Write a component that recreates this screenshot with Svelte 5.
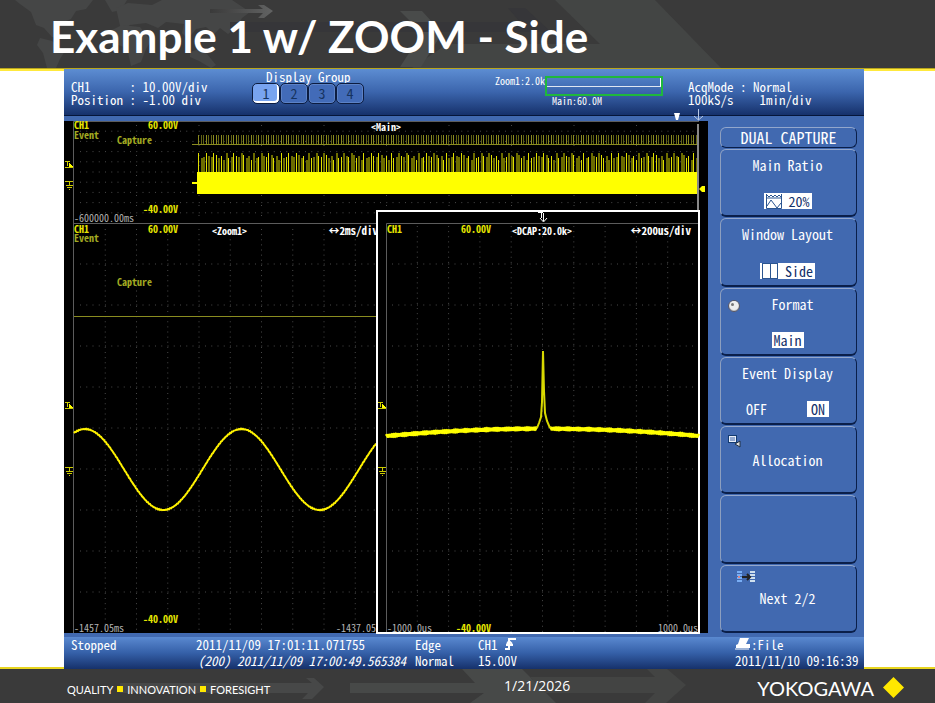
<script lang="ts">
  type Label = { x: number; y: number; text: string; kind?: string; size?: number; end?: boolean };

  let group = $state(1);

  // Horizontal and vertical positions of the dotted graticule
  const steps = (from: number, step: number, count: number) =>
    Array.from({ length: count }, (_, i) => from + step * (i + 1));

  const mainCols = steps(74, 62.5, 9);
  const mainRows = steps(121, 10.2, 9);
  const zoomCols = steps(74, 31.25, 9);
  const dcapCols = steps(386, 31.3, 9);
  const rows = steps(223, 41, 9);

  // 200 captured events spread over the main record
  const tops = [153, 158, 157, 153, 156, 157, 153, 155, 158, 156, 160];
  const events = Array.from({ length: 200 }, (_, i) => ({
    x: 198 + Math.round(i * 2.5),
    top: tops[i % tops.length],
    bright: i % 3 === 0 || i % 7 === 0
  }));

  // Small repeatable jitter so the traces look sampled
  const noise = (x: number) => Math.sin(x * 78.233) * 0.4;

  let sine = '';
  for (let x = 74; x <= 376; x++) {
    const y = 469.5 - 40.5 * Math.cos(((x - 85) / 156.5) * 2 * Math.PI) + noise(x);
    sine += `${x === 74 ? 'M' : 'L'}${x} ${y.toFixed(1)}`;
  }

  function arc(from: number, to: number) {
    let d = '';
    for (let x = from; x <= to; x++) {
      const y = 428.7 + 7.3 * ((x - 543) / 156) ** 2 + noise(x);
      d += `${x === from ? 'M' : 'L'}${x} ${y.toFixed(1)}`;
    }
    return d;
  }
  const base = arc(386, 537) + arc(550, 699);

  const labels: Label[] = [
    { x: 74, y: 129, text: 'CH1' },
    { x: 74, y: 139, text: 'Event', kind: 'event' },
    { x: 117, y: 144, text: 'Capture', kind: 'event' },
    { x: 178, y: 129, text: '60.00V', end: true },
    { x: 371, y: 131, text: '<Main>', kind: 'white' },
    { x: 178, y: 213, text: '-40.00V', end: true },
    { x: 74, y: 222, text: '-600000.00ms', kind: 'grey' },
    { x: 74, y: 233, text: 'CH1' },
    { x: 74, y: 242, text: 'Event', kind: 'event' },
    { x: 117, y: 286, text: 'Capture', kind: 'event' },
    { x: 178, y: 233, text: '60.00V', end: true },
    { x: 212, y: 235, text: '<Zoom1>', kind: 'white' },
    { x: 378, y: 235, text: '↔2ms/div', kind: 'white', size: 11, end: true },
    { x: 178, y: 623, text: '-40.00V', end: true },
    { x: 74, y: 632, text: '-1457.05ms', kind: 'grey' },
    { x: 376, y: 632, text: '-1437.05', kind: 'grey', end: true }
  ];

  const dcapLabels: Label[] = [
    { x: 387, y: 233, text: 'CH1' },
    { x: 491, y: 233, text: '60.00V', end: true },
    { x: 512, y: 235, text: '<DCAP:20.0k>', kind: 'white' },
    { x: 691, y: 235, text: '↔200us/div', kind: 'white', size: 11, end: true },
    { x: 491, y: 632, text: '-40.00V', end: true },
    { x: 387, y: 632, text: '-1000.0us', kind: 'grey' },
    { x: 698, y: 632, text: '1000.0us', kind: 'grey', end: true }
  ];
</script>

{#snippet tag(l: Label)}
  <text
    x={l.x}
    y={l.y}
    class={l.kind ?? 'yellow'}
    class:large={l.size === 11}
    text-anchor={l.end ? 'end' : 'start'}>{l.text}</text>
{/snippet}

{#snippet marks(x: number, t: number, g: number)}
  <g class="mark" shape-rendering="crispEdges">
    <path d="M{x} {t}h5M{x + 2} {t}v5M{x} {t + 6}h8" />
    <path class="solid" d="M{x + 4} {t + 6}v-4l4 4z" />
    <path d="M{x} {g}h8M{x + 4} {g}v4M{x + 1} {g + 4}h7M{x + 2} {g + 6}h5M{x + 4} {g + 8}h1" />
  </g>
{/snippet}

<div class="slide">
  <header>
    <svg class="deco" viewBox="0 0 935 68" preserveAspectRatio="xMinYMin slice" aria-hidden="true">
      <g fill="#454646">
        <path d="M15 0h78l-7 9-10 2-5 8-12 5-4 9 6 6-9-2-8-9-8-3-5-13-11-8z" />
        <path d="M40 38l12 3 13 10-5 8-4 9h-9l-4-15-6-8z" />
        <path d="M105 0h22l-6 10-9 2z" />
        <path d="M116 8l12-5 24 2 10-5h70l18 12-8 6-5 9-9 7-8-6-6 6-8-7-10 2-8 10-6-6 2-9-18-2-8 6-12-5-16 2-9 5z" />
        <path d="M110 31l12-6 18 2 11 14-5 8-5 13-10 4-4-18-12-4z" />
        <path d="M190 52l9-3 8 5 9 11-5 3-12-7-9-4z" />
      </g>
      <path d="M555 0h100l66 68H412l35-24h153z" fill="#434544" />
      <path d="M400 11h22l20 22-21 34h-21l22-34z" fill="#494b4a" />
      <path d="M230 22h290l-12-14h17l26 24H230z" fill="#363639" />
      <linearGradient id="fade"><stop stop-color="#3a3a3a" /><stop offset="1" stop-color="#626363" /></linearGradient>
      <path d="M210 9h53l-5-4h6l9 6-9 7h-6l5-5h-53z" fill="url(#fade)" />
    </svg>
    <h1>Example 1 w/ ZOOM - Side</h1>
  </header>

  <main>
    <div class="scope">
      <div class="topbar">
        <div class="channel">
          <p>CH1&nbsp;&nbsp;&nbsp;&nbsp;&nbsp; : 10.00V/div</p>
          <p>Position : -1.00 div</p>
        </div>
        <div class="display">
          <p>Display Group</p>
          <div class="groups">
            {#each [1, 2, 3, 4] as n}
              <button type="button" class:active={group === n} onclick={() => (group = n)}>{n}</button>
            {/each}
          </div>
        </div>
        <div class="record">
          <span>Zoom1:2.0k</span>
          <div class="span">
            <div class="range"><i></i></div>
            <span>Main:60.0M</span>
          </div>
        </div>
        <div class="acq">
          <p>AcqMode : Normal</p>
          <p>100kS/s&nbsp;&nbsp;&nbsp; 1min/div</p>
        </div>
      </div>

      <div class="body">
        <svg class="plot" viewBox="64 121 644 512" role="img" aria-label="Oscilloscope waveforms">
          <rect x="64" y="121" width="644" height="512" />

          <!-- graticules -->
          <g class="grid">
            {#each mainCols as x}<path d="M{x} 125V223" stroke-dasharray="1 9" />{/each}
            {#each mainRows as y}<path d="M80 {y}H697" stroke-dasharray="1 5.25" />{/each}
            {#each zoomCols as x}<path d="M{x} 229V633" stroke-dasharray="1 4.125" />{/each}
            {#each rows as y}<path d="M80 {y}H376" stroke-dasharray="1 5.25" />{/each}
          </g>
          <path class="frame" d="M73.5 633V121.500H699M74 223.500H699" />

          <!-- main record -->
          <g shape-rendering="crispEdges">
            {#each events as e}
              <rect x={e.x} y="135" width="1" height="9" fill={e.bright ? '#8a8a20' : '#626414'} />
              <rect
                x={e.x}
                y={e.top}
                width={e.bright ? 1 : 2}
                height={172 - e.top}
                fill={e.bright ? '#e0e000' : '#6c6c00'}
              />
            {/each}
            <rect x="192" y="144" width="507" height="1" fill="#8a8c20" />
            <rect x="192" y="182" width="6" height="2" fill="#ff0" />
            <rect x="197" y="172" width="502" height="22" fill="#ff0" />
            <rect x="697" y="124" width="2" height="87" fill="#888" />
          </g>
          <path d="M699 189l3-3h3v6h-3z" fill="#ff0" />

          <!-- zoom1 -->
          <path class="event-line" d="M74 316.500H377" />
          <path class="trace" d={sine} />
          {#each labels as l}{@render tag(l)}{/each}
          {@render marks(65, 161, 181)}
          {@render marks(65, 402, 467)}

          <!-- dual capture window -->
          <rect x="377" y="211" width="322" height="422" stroke="#fff" stroke-width="2" />
          <g class="grid">
            {#each dcapCols as x}<path d="M{x} 226V632" stroke-dasharray="1 4.125" />{/each}
            {#each rows as y}<path d="M392 {y}H697" stroke-dasharray="1 5.25" />{/each}
          </g>
          <path class="frame" d="M386.500 632V223.500H698" />
          <path class="trace thick" d={base} />
          <path class="spike" d="M537 428l2-5 2-6 1-15 1-51 1 40 1 22 2 8 3 7" />
          {#each dcapLabels as l}{@render tag(l)}{/each}
          {@render marks(378, 402, 467)}
          <path class="cursor" d="M538 212.500h5M541.500 212v6M543.500 213v8M540 218l3.500 4 3.500-4" />

          <!-- position pointers reaching into the top bar -->
          <path d="M674 113h6l-2 7h-2z" fill="#fff" />
          <path class="cursor pale" d="M698.500 109v11M694 116l4.500 4 4.500-4" />
        </svg>

        <nav class="menu" aria-label="Dual capture">
          <h2>DUAL CAPTURE</h2>
          <button type="button">
            <span>Main Ratio</span>
            <span class="value">
              <svg width="18" height="16" viewBox="0 0 18 16">
                <path d="M2.500 1v14.500h15V1" />
                <path d="M3 2l2 2 2-2 2 2 2-2 2 2 2-2 2 2M3 5h14M3 13l4-6 6 8 4-5" />
              </svg>
              <b>20%</b>
            </span>
          </button>
          <button type="button">
            <span>Window Layout</span>
            <span class="value">
              <svg width="18" height="16" viewBox="0 0 18 16">
                <path d="M2.500 0v15.500M10.500 0v15.500M17.500 0v15.500M2 .5h16M2 15.500h16" />
              </svg>
              <b>Side</b>
            </span>
          </button>
          <button type="button">
            <svg class="corner" width="12" height="12" viewBox="0 0 12 12">
              <circle cx="6" cy="6" r="5.500" fill="#c9c9c9" stroke="#556" />
              <circle cx="6" cy="5.500" r="4.500" fill="#eee" />
              <circle cx="4.500" cy="4.500" r="1.500" fill="#777" />
            </svg>
            <span class="indent">Format</span>
            <span class="value"><b>Main</b></span>
          </button>
          <button type="button">
            <span>Event Display</span>
            <span class="toggle"><span>OFF</span><b>ON</b></span>
          </button>
          <button type="button" class="single">
            <svg class="corner allocation" width="14" height="13" viewBox="0 0 14 13">
              <rect x=".5" y=".5" width="8" height="7" fill="#e8eef8" stroke="#123a70" />
              <path d="M2 3h5M2 5h5" stroke="#3c64a8" fill="none" />
              <path d="M7 9l5-3v6z" fill="#ddd" stroke="#234" />
            </svg>
            <span>Allocation</span>
          </button>
          <button type="button" aria-label="Empty"></button>
          <button type="button" class="single">
            <svg class="corner next" width="18" height="12" viewBox="0 0 18 12">
              <path d="M0 1h5M0 4h5M0 7h5M0 10h5" stroke="#79aef5" stroke-width="2" />
              <path d="M13 1h5M13 4h5M13 7h5M13 10h5" stroke="#cfe0ee" stroke-width="2" />
              <path d="M5 6h7M10 3l3 3-3 3" stroke="#222" stroke-width="2" fill="none" />
              <rect x="1" y="5" width="2" height="2" fill="#d88" />
            </svg>
            <span>Next 2/2</span>
          </button>
        </nav>
      </div>

      <div class="status">
        <div><p>Stopped</p></div>
        <div>
          <p>2011/11/09 17:01:11.071755</p>
          <p class="last">(200) 2011/11/09 17:00:49.565384</p>
        </div>
        <div><p>Edge</p><p>Normal</p></div>
        <div>
          <p>
            CH1
            <svg width="12" height="12" viewBox="0 0 12 12">
              <path d="M1 11h4V1h7M2 7h7M3 6l2-3 3 3" fill="none" stroke="#fff" stroke-width="2" />
            </svg>
          </p>
          <p>15.00V</p>
        </div>
        <div>
          <p>
            <svg width="16" height="12" viewBox="0 0 16 12">
              <path d="M5 0h9l-3 6h4v4H1V7l2-1z" fill="#fff" />
              <path d="M0 11h14" stroke="#fff" />
            </svg>:File
          </p>
          <p>2011/11/10 09:16:39</p>
        </div>
      </div>
    </div>
  </main>

  <footer>
    <svg class="deco" viewBox="0 0 935 34" preserveAspectRatio="xMinYMin slice" aria-hidden="true">
      <path d="M120 14h192l-6-5h8l10 9-12 12h-10l6-6H120z" fill="#474848" />
      <path d="M350 14h125l-13-14h60l34 34h-86l14-10H350z" fill="#474948" />
      <path d="M530 8h125l-8-8h20l19 16-20 18h-21l10-10H545z" fill="#434443" />
    </svg>
    <p class="motto">QUALITY<i></i>INNOVATION<i></i>FORESIGHT</p>
    <time datetime="2026-01-21">1/21/2026</time>
    <p class="brand">
      YOKOGAWA
      <svg width="21" height="21" viewBox="0 0 21 21" aria-hidden="true">
        <path d="M10.500 0L21 10.500 10.500 21 0 10.500z" fill="#ffe800" />
      </svg>
    </p>
  </footer>
</div>

<style>
  :global(body) {
    margin: 0;
    background: #fff;
  }

  .slide {
    display: flex;
    flex-direction: column;
    font-family: 'Noto Sans CJK JP', 'Liberation Mono', monospace;
    color: #fff;
  }

  p,
  h1,
  h2 {
    margin: 0;
    font-weight: normal;
    white-space: nowrap;
  }

  header,
  footer {
    position: relative;
    background: #3a3a3a;
    overflow: hidden;
  }

  header {
    height: 68px;
    border-bottom: 1px solid #b8a51c;
  }

  .deco {
    position: absolute;
    inset: 0;
    width: 100%;
    height: 100%;
  }

  h1 {
    position: relative;
    padding: 8px 0 0 50px;
    font: bold 44px/56px Lato, sans-serif;
  }

  main {
    padding: 0 71px 0 64px;
    background: linear-gradient(#ffe93c 2px, #fff 2px, #fff calc(100% - 2px), #e8d51e calc(100% - 2px));
  }

  .scope {
    background: #4169b0;
    font-size: 13px;
    line-height: 13px;
    font-feature-settings: 'hwid';
  }

  .topbar {
    display: grid;
    grid-template-columns: 181fr 243fr 193fr 176fr;
    height: 46px;
    margin-bottom: 5px;
    padding-left: 7px;
    border-bottom: 1px solid #06163a;
    background: linear-gradient(#5d8dd2, #3b65ad 50%, #16316b);
  }

  .topbar > div {
    min-width: 0;
  }

  .channel,
  .acq {
    padding-top: 11px;
  }

  .display p {
    padding: 1px 0 0 14px;
  }

  .groups {
    display: flex;
  }

  .groups button {
    width: 28px;
    height: 21px;
    padding: 0;
    border: 1px solid #0c1c40;
    border-radius: 5px;
    background: #426bb8;
    box-shadow: inset 0 0 0 1px #5c82c6;
    color: #16335f;
    font: inherit;
    font-size: 14px;
  }

  .groups button.active {
    background: #78a4f0;
    box-shadow: inset -1px -1px 0 1px #fff;
  }

  .record {
    display: flex;
    font-size: 10px;
    line-height: 12px;
    padding-top: 6px;
  }

  .span {
    width: 118px;
    margin-top: 1px;
  }

  .range {
    box-sizing: border-box;
    height: 20px;
    border: 2px solid #1fb83c;
  }

  .range i {
    display: block;
    height: 8px;
    border-right: 1px solid #fff;
    border-bottom: 1px solid #dfe6f2;
  }

  .span span {
    display: block;
    padding-left: 7px;
    line-height: 10px;
  }

  .body {
    display: grid;
    grid-template-columns: 644fr 156fr;
  }

  .plot {
    position: relative;
    width: 100%;
    height: auto;
    overflow: visible;
  }

  .plot text {
    font-size: 10px;
    white-space: pre;
  }

  .plot .large {
    font-size: 11px;
  }

  .yellow {
    fill: #e6e600;
    font-weight: bold;
  }

  .event {
    fill: #a3aa22;
    font-weight: bold;
  }

  .white {
    fill: #fff;
    font-weight: bold;
  }

  .grey {
    fill: #b4b4b4;
  }

  .grid {
    stroke: #484848;
    fill: none;
  }

  .frame {
    stroke: #5c5c5c;
    fill: none;
  }

  .event-line {
    stroke: #8a8c20;
  }

  .trace,
  .spike {
    fill: none;
    stroke: #fff200;
    stroke-width: 2;
  }

  .thick {
    stroke: #ff0;
    stroke-width: 4;
  }

  .spike {
    stroke: #d8d800;
  }

  .mark path {
    fill: none;
    stroke: #cccc00;
  }

  .mark .solid {
    fill: #ff0;
    stroke: none;
  }

  .cursor {
    fill: none;
    stroke: #fff;
  }

  .pale {
    stroke: #b9c9e6;
  }

  .menu {
    min-width: 0;
    display: flex;
    flex-direction: column;
    gap: 1px;
    padding: 6px 7px 0 12px;
    font-size: 14px;
    line-height: 18px;
  }

  .menu h2,
  .menu button {
    box-sizing: border-box;
    border: 1px solid #0a1f4a;
    border-top-color: #93a7cc;
    border-left-color: #8d9fbf;
    border-radius: 6px;
    background: none;
    text-align: center;
  }

  .menu h2 {
    height: 21px;
    font-size: 16px;
    line-height: 18px;
  }

  .menu button {
    position: relative;
    flex: 1;
    display: flex;
    flex-direction: column;
    align-items: center;
    justify-content: space-between;
    padding: 6px 2px 6px 0;
    border-bottom-width: 2px;
    color: #fff;
    font: inherit;
  }

  .menu .single {
    justify-content: center;
  }

  .menu .corner {
    position: absolute;
    top: 11px;
    left: 7px;
  }

  .menu .allocation {
    top: 8px;
  }

  .menu .next {
    top: 5px;
    left: 16px;
  }

  .indent {
    padding-left: 10px;
  }

  b {
    font-weight: normal;
  }

  .value,
  .toggle b {
    display: flex;
    background: #fff;
    color: #12306a;
    line-height: 16px;
  }

  .value b {
    padding: 0 2px;
  }

  .value svg + b {
    padding-left: 7px;
  }

  .value path {
    fill: none;
    stroke: #2b5590;
  }

  .toggle {
    display: flex;
    gap: 40px;
    line-height: 16px;
  }

  .toggle b {
    padding: 0 4px;
  }

  .status {
    display: grid;
    grid-template-columns: 125fr 219fr 63fr 257fr 129fr;
    margin-top: 4px;
    padding-left: 7px;
    height: 32px;
    background: linear-gradient(#5a89d0, #3560a8 50%, #16316b);
    line-height: 16px;
  }

  .status > div {
    min-width: 0;
  }

  .last {
    padding-left: 2px;
    font-style: italic;
  }

  footer {
    display: grid;
    grid-template-columns: 504fr 431fr;
    align-items: center;
    height: 34px;
    font-family: Lato, sans-serif;
  }

  footer p,
  footer time {
    position: relative;
  }

  footer time {
    grid-area: 1 / 2;
    font: 14px/20px 'Open Sans', sans-serif;
  }

  .motto {
    display: flex;
    align-items: center;
    gap: 4px;
    padding: 6px 0 0 67px;
    font-size: 11px;
  }

  .motto i {
    width: 6px;
    height: 6px;
    background: #ffe800;
  }

  .brand {
    grid-area: 1 / 2;
    justify-self: end;
    display: flex;
    align-items: center;
    gap: 9px;
    padding: 3px 31px 0 0;
    font-size: 20px;
    line-height: 24px;
  }
</style>
